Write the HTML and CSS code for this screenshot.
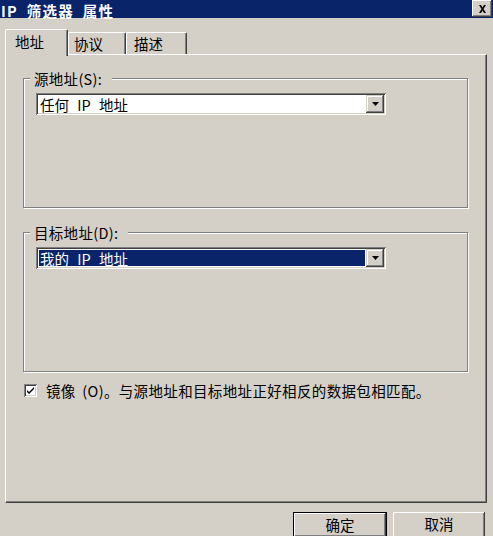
FILE: index.html
```html
<!DOCTYPE html>
<html lang="zh-CN">
<head>
<meta charset="utf-8">
<title>IP 筛选器 属性</title>
<link rel="stylesheet" href="styles.css">
</head>
<body>
<div class="window">
  <div class="titlebar">
    <span class="title">IP 筛选器 属性</span>
    <div class="close">
      <svg width="9" height="8" viewBox="0 0 9 8"><path d="M1 0h2l1.5 2.5L6 0h2L5.5 4 8 8H6L4.5 5.5 3 8H1l2.5-4z" fill="#000"/></svg>
    </div>
  </div>
  <div class="main">
    <div class="tabs">
      <div class="tab active">地址</div>
      <div class="tab t2">协议</div>
      <div class="tab t3">描述</div>
    </div>
    <div class="panel">
      <div class="group g1">
        <span class="glabel">源地址(S):</span>
        <div class="combo">
          <div class="field"><span class="value">任何 IP 地址</span></div>
          <div class="drop"><svg width="7" height="4" viewBox="0 0 7 4"><path d="M0 0h7L3.5 4z" fill="#000"/></svg></div>
        </div>
      </div>
      <div class="group g2">
        <span class="glabel">目标地址(D):</span>
        <div class="combo">
          <div class="field"><span class="value selected">我的 IP 地址</span></div>
          <div class="drop"><svg width="7" height="4" viewBox="0 0 7 4"><path d="M0 0h7L3.5 4z" fill="#000"/></svg></div>
        </div>
      </div>
      <div class="check">
        <span class="box"><svg width="9" height="9" viewBox="0 0 9 9"><path d="M1 4l2 2 5-5v2L3 8 1 6z" fill="#000"/></svg></span>
        <span class="ctext">镜像 (O)。与源地址和目标地址正好相反的数据包相匹配。</span>
      </div>
    </div>
    <div class="buttons">
      <div class="btn default"><span>确定</span></div>
      <div class="btn cancel"><span>取消</span></div>
    </div>
  </div>
</div>
</body>
</html>
```
FILE: styles.css
```css
html, body {
  margin: 0;
  padding: 0;
}
body {
  width: 493px;
  height: 536px;
  overflow: hidden;
  background: #d4d0c8;
  font-family: "Noto Sans CJK SC", "Liberation Sans", sans-serif;
  font-size: 14.5px;
  color: #000;
}
.titlebar {
  height: 18px;
  background: #0a246a;
  display: flex;
  justify-content: space-between;
  align-items: flex-start;
}
.title {
  color: #fff;
  font-weight: bold;
  font-size: 14.5px;
  line-height: 21px;
  height: 18px;
  padding-left: 1px;
  letter-spacing: 1.3px;
  word-spacing: 4px;
  white-space: pre;
}
.close {
  width: 20px;
  height: 17px;
  margin-right: 1px;
  box-sizing: border-box;
  background: #d4d0c8;
  box-shadow: inset -1px -1px #404040, inset 1px 1px #fff, inset -2px -2px #808080;
  display: flex;
  align-items: center;
  justify-content: center;
}
.main {
  padding: 11px 0 0 5px;
}
.tabs {
  display: flex;
  align-items: flex-start;
  height: 25px;
}
.tab {
  box-sizing: border-box;
  height: 22px;
  margin-top: 3px;
  border-top: 1px solid #fff;
  border-left: 1px solid #fff;
  border-right: 1px solid #404040;
  border-radius: 2px 2px 0 0;
  box-shadow: inset -1px 0 #808080;
  background: #d4d0c8;
  line-height: 20px;
  display: flex;
  align-items: center;
}
.tab.active {
  position: relative;
  z-index: 1;
  height: 27px;
  margin-top: 0;
  width: 63px;
  padding: 0 0 2px 9px;
}
.tab.t2 {
  width: 58px;
  padding-left: 5px;
}
.tab.t3 {
  width: 61px;
  padding-left: 7px;
}
.panel {
  box-sizing: border-box;
  width: 482px;
  height: 449px;
  border-top: 1px solid #fff;
  border-left: 1px solid #fff;
  border-right: 1px solid #404040;
  border-bottom: 1px solid #404040;
  box-shadow: inset -1px -1px #808080;
  padding: 23px 0 0 17px;
}
.group {
  box-sizing: border-box;
  width: 445px;
  border: 1px solid #808080;
  box-shadow: inset 1px 1px #fff, 1px 1px #fff;
}
.g1 {
  height: 130px;
}
.g2 {
  height: 140px;
  margin-top: 24px;
}
.glabel {
  display: block;
  width: max-content;
  height: 17px;
  line-height: 17px;
  margin: -9px 0 0 6px;
  padding: 0 10px 0 4px;
  background: #d4d0c8;
  letter-spacing: 0.3px;
}
.combo {
  box-sizing: border-box;
  width: 350px;
  height: 22px;
  margin: 6px 0 0 12px;
  padding: 2px;
  background: #fff;
  box-shadow: inset 1px 1px #808080, inset -1px -1px #fff, inset 2px 2px #404040, inset -2px -2px #d4d0c8;
  display: flex;
}
.field {
  flex: 1;
  padding: 1px;
  display: flex;
}
.value {
  flex: 1;
  padding-left: 1px;
  line-height: 17px;
  white-space: pre;
  word-spacing: 5px;
}
.value.selected {
  background: #0a246a;
  color: #fff;
}
.drop {
  width: 18px;
  box-sizing: border-box;
  background: #d4d0c8;
  box-shadow: inset -1px -1px #404040, inset 1px 1px #d4d0c8, inset -2px -2px #808080, inset 2px 2px #fff;
  display: flex;
  align-items: center;
  justify-content: center;
}
.check {
  display: flex;
  align-items: center;
  height: 13px;
  margin: 12px 0 0 1px;
}
.box {
  box-sizing: border-box;
  width: 13px;
  height: 13px;
  background: #fff;
  box-shadow: inset 1px 1px #808080, inset -1px -1px #fff, inset 2px 2px #404040, inset -2px -2px #d4d0c8;
  display: flex;
  align-items: center;
  justify-content: center;
  flex: none;
}
.ctext {
  margin-left: 9px;
  white-space: pre;
  line-height: 17px;
  word-spacing: 3px;
  letter-spacing: 0.35px;
}
.buttons {
  display: flex;
  justify-content: flex-end;
  gap: 6px;
  margin-top: 9px;
  padding-right: 8px;
}
.btn {
  box-sizing: border-box;
  height: 26px;
  background: #d4d0c8;
  display: flex;
  justify-content: center;
  padding-top: 2px;
}
.btn span {
  line-height: 20px;
}
.btn.default {
  width: 94px;
  border: 1px solid #000;
  box-shadow: inset -1px -1px #404040, inset 1px 1px #fff, inset -2px -2px #808080;
}
.btn.cancel {
  width: 92px;
  box-shadow: inset -1px -1px #404040, inset 1px 1px #fff, inset -2px -2px #808080;
}
```
